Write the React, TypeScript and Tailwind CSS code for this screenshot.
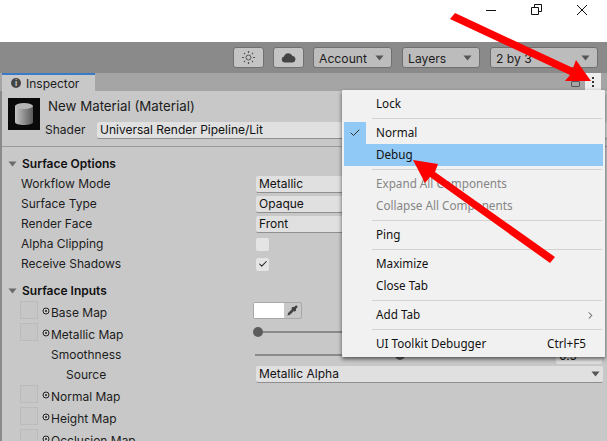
import { Check, ChevronRight, Pipette } from 'lucide-react'

const uiFont = 'font-["Inter","Liberation_Sans",sans-serif]'
const menuFont = 'font-["Noto_Sans","Liberation_Sans",sans-serif]'

function Caret({ color = '#555' }: { color?: string }) {
  return (
    <svg width="9" height="6" viewBox="0 0 9 6" className="shrink-0">
      <path d="M0.5 0.5H8.5L4.5 5.5Z" fill={color} />
    </svg>
  )
}

function ToolDropdown({ label, className }: { label: string; className: string }) {
  return (
    <div className={`flex h-[21px] items-center justify-between rounded-[3px] border border-[#707070] bg-[#bcbcbc] pl-[5px] pr-[7px] text-[12.2px] text-[#1c1c1c] ${className}`}>
      <span className="mt-[3px]">{label}</span>
      <Caret />
    </div>
  )
}

function FieldDropdown({ label }: { label: string }) {
  return (
    <div className="flex h-[17px] w-[347px] items-center justify-between rounded-[2px] border-b border-[#8f8f8f] bg-[#e0e0e0] pl-[3px] pr-[3px] text-[12px] text-[#111]">
      <span>{label}</span>
      <Caret />
    </div>
  )
}

function Row({ label, children }: { label: string; children?: React.ReactNode }) {
  return (
    <div className="flex h-5 items-center">
      <span className="w-[235px] text-[12px] text-[#1c1c1c]">{label}</span>
      {children}
    </div>
  )
}

function SectionHeader({ label }: { label: string }) {
  return (
    <div className="flex h-5 items-center gap-[5px] pl-[6px] text-[12px] font-semibold text-[#111]">
      <Caret color="#6a6a6a" />
      <span>{label}</span>
    </div>
  )
}

function MapRow({ label, children }: { label: string; children?: React.ReactNode }) {
  return (
    <div className="flex h-[22px] items-start">
      <div className="ml-[18px] h-[18px] w-[18px] border border-[#bbb] bg-[#c6c6c6]" />
      <svg width="8" height="8" viewBox="0 0 8 8" className="ml-[4px] mt-[6px] shrink-0">
        <circle cx="4" cy="4" r="3" fill="none" stroke="#222" strokeWidth="1" />
        <circle cx="4" cy="4" r="1" fill="#222" />
      </svg>
      <span className="ml-[1px] mt-[3px] w-[202px] text-[12px] text-[#1c1c1c]">{label}</span>
      {children}
    </div>
  )
}

function MenuItem({ label, shortcut, active, checked, disabled, submenu }: {
  label: string
  shortcut?: string
  active?: boolean
  checked?: boolean
  disabled?: boolean
  submenu?: boolean
}) {
  return (
    <div className={`flex h-[22px] items-center text-[11.7px] ${active ? 'bg-[#90c8f6]' : ''} ${disabled ? 'text-[#858585]' : 'text-[#111]'}`}>
      <div className={`flex h-[22px] w-[22px] items-center justify-center ${checked ? 'bg-[#90c8f6]' : ''}`}>
        {checked && <Check size={12} strokeWidth={2} className="text-[#333]" />}
      </div>
      <span className="ml-[10px] flex-1">{label}</span>
      {shortcut && <span className="mr-[17px]">{shortcut}</span>}
      {submenu && <ChevronRight size={11} className="mr-[7px] text-[#333]" />}
    </div>
  )
}

function MenuSep() {
  return <div className="my-[3px] ml-[28px] mr-[1px] h-px bg-[#d2d2d2]" />
}

export default function App() {
  return (
    <div className={`relative h-[441px] w-[607px] overflow-hidden bg-white ${uiFont}`}>
      {/* window title bar */}
      <div className="flex h-[42px] items-start justify-end">
        <svg width="101" height="20" viewBox="0 0 101 20" className="mr-[20px]" fill="none" stroke="#111" strokeWidth="1">
          <path d="M0 10.5H10" />
          <path d="M45.5 7.5H52.5V14.5H45.5ZM48.5 7.5V4.5H55.5V11.5H52.5" />
          <path d="M91 5L101 15M101 5L91 15" />
        </svg>
      </div>

      {/* toolbar */}
      <div className="flex h-[31px] items-start bg-[#8a8a8a] pl-[233px] pt-[5px]">
        <div className="flex h-[21px] w-[31px] items-center justify-center rounded-[3px] border border-[#707070] bg-[#c4c4c4]">
          <svg width="13" height="13" viewBox="0 0 13 13" fill="none" stroke="#555">
            <circle cx="6.5" cy="6.5" r="2.5" />
            <path d="M6.5 0V2M6.5 11V13M0 6.5H2M11 6.5H13M2 2L3 3M10 10L11 11M2 11L3 10M10 3L11 2" strokeWidth="1.2" />
          </svg>
        </div>
        <div className="ml-[9px] flex h-[21px] w-[31px] items-center justify-center rounded-[3px] border border-[#707070] bg-[#c4c4c4]">
          <svg width="15" height="11" viewBox="0 0 15 11" fill="#444">
            <path d="M3.5 10.5A3 3 0 0 1 3 4.6A4.5 4.5 0 0 1 11.5 4A3.3 3.3 0 0 1 11.8 10.5Z" />
          </svg>
        </div>
        <ToolDropdown label="Account" className="ml-[9px] w-[79px]" />
        <ToolDropdown label="Layers" className="ml-[10px] w-[78px]" />
        <ToolDropdown label="2 by 3" className="ml-[10px] w-[108px]" />
      </div>

      {/* tab strip */}
      <div className="flex h-[18px] items-stretch justify-between bg-[#a5a5a5] pl-[2px] pr-[6px]">
        <div className="flex w-[93px] items-center gap-[5px] border-t-2 border-[#3a7bc8] bg-[#c8c8c8] pl-[9px] text-[12px] text-[#1c1c1c]">
          <span className="flex h-[10px] w-[10px] items-center justify-center rounded-full bg-[#444] text-[8px] font-bold text-[#c8c8c8]">i</span>
          <span className="mt-[1px]">Inspector</span>
        </div>
        <div className="flex items-center gap-[5px]">
          <div className="mt-[4px] h-[6px] w-[9px] rounded-[1px] border border-[#555]" />
          <div className="flex h-[18px] w-[16px] flex-col items-center justify-center gap-[2px] bg-[#ededed]">
            <span className="h-[2px] w-[2px] bg-[#333]" />
            <span className="h-[2px] w-[2px] bg-[#333]" />
            <span className="h-[2px] w-[2px] bg-[#333]" />
          </div>
        </div>
      </div>

      {/* inspector body */}
      <div className="h-[350px] border-l-2 border-[#8a8a8a] bg-[#c8c8c8]">
        <div className="flex h-[56px] items-start border-b border-[#9a9a9a] pl-[6px] pt-[7px]">
          <div className="flex h-[32px] w-[32px] items-center justify-center bg-[#0a0a0a]">
            <svg width="20" height="24" viewBox="0 0 20 24">
              <defs>
                <linearGradient id="cyl" x1="0" x2="1" y1="0" y2="0">
                  <stop offset="0" stopColor="#c4c4c4" />
                  <stop offset="1" stopColor="#5a5a5a" />
                </linearGradient>
              </defs>
              <path d="M1 4V20C1 22 5 23 10 23S19 22 19 20V4Z" fill="url(#cyl)" />
              <ellipse cx="10" cy="4" rx="9" ry="3" fill="#b5b5b5" />
            </svg>
          </div>
          <div className="ml-[5px] flex-1">
            <div className="ml-[3px] -mt-[1px] text-[13.3px] leading-[18px] text-[#1c1c1c]">New Material (Material)</div>
            <div className="mt-[6px] flex items-center">
              <span className="w-[52px] text-[12px] text-[#1c1c1c]">Shader</span>
              <div className="flex h-[17px] flex-1 items-center rounded-[2px] border-b border-[#8f8f8f] bg-[#e0e0e0] pl-[3px] text-[12px] text-[#111]">
                Universal Render Pipeline/Lit
              </div>
            </div>
          </div>
        </div>

        <div className="mt-[7px]">
          <SectionHeader label="Surface Options" />
          <div className="pl-[19px]">
            <Row label="Workflow Mode"><FieldDropdown label="Metallic" /></Row>
            <Row label="Surface Type"><FieldDropdown label="Opaque" /></Row>
            <Row label="Render Face"><FieldDropdown label="Front" /></Row>
            <Row label="Alpha Clipping">
              <div className="h-[13px] w-[13px] rounded-[2px] bg-[#e4e4e4]" />
            </Row>
            <Row label="Receive Shadows">
              <div className="flex h-[13px] w-[13px] items-center justify-center rounded-[2px] bg-[#e4e4e4]">
                <Check size={10} strokeWidth={2.5} className="text-[#222]" />
              </div>
            </Row>
          </div>
          <div className="mt-[7px]">
            <SectionHeader label="Surface Inputs" />
          </div>
          <MapRow label="Base Map">
            <div className="mt-[1px] flex h-[17px] w-[49px] items-stretch rounded-[2px] border border-[#a8a8a8] bg-[#c8c8c8]">
              <div className="w-[30px] bg-white" />
              <Pipette size={11} fill="#444" className="ml-[3px] mt-[2px] text-[#333]" />
            </div>
          </MapRow>
          <MapRow label="Metallic Map">
            <div className="mt-[4px] flex w-[349px] items-center">
              <span className="h-[10px] w-[10px] rounded-full bg-[#5c5c5c]" />
              <span className="h-[2px] flex-1 bg-[#8a8a8a]" />
            </div>
          </MapRow>
          <div className="flex h-[20px] items-center">
            <span className="ml-[49px] w-[204px] text-[12px] text-[#1c1c1c]">Smoothness</span>
            <div className="flex w-[347px] items-center">
              <span className="h-[2px] w-[140px] bg-[#8a8a8a]" />
              <span className="h-[10px] w-[10px] rounded-full bg-[#5c5c5c]" />
              <span className="h-[2px] w-[150px] bg-[#8a8a8a]" />
              <span className="ml-[1px] h-[17px] flex-1 rounded-[2px] bg-[#e0e0e0] pl-[3px] text-[12px] leading-[17px] text-[#111]">0.5</span>
            </div>
          </div>
          <div className="flex h-[20px] items-center pb-[1px]">
            <span className="ml-[64px] w-[190px] text-[12px] text-[#1c1c1c]">Source</span>
            <FieldDropdown label="Metallic Alpha" />
          </div>
          <MapRow label="Normal Map" />
          <MapRow label="Height Map" />
          <MapRow label="Occlusion Map" />
        </div>
      </div>

      {/* context menu */}
      <div className={`absolute left-[342px] top-[90px] w-[263px] rounded-[1px] bg-[#f1f1f1] px-[2px] pb-[2px] pt-[3px] shadow-[0_2px_4px_rgba(0,0,0,0.6)] ${menuFont}`}>
        <MenuItem label="Lock" />
        <MenuSep />
        <MenuItem label="Normal" checked />
        <MenuItem label="Debug" active />
        <MenuSep />
        <MenuItem label="Expand All Components" disabled />
        <MenuItem label="Collapse All Components" disabled />
        <MenuSep />
        <MenuItem label="Ping" />
        <MenuSep />
        <MenuItem label="Maximize" />
        <MenuItem label="Close Tab" />
        <MenuSep />
        <MenuItem label="Add Tab" submenu />
        <MenuSep />
        <MenuItem label="UI Toolkit Debugger" shortcut="Ctrl+F5" />
      </div>

      {/* annotation arrows */}
      <svg width="607" height="441" viewBox="0 0 607 441" className="pointer-events-none absolute left-0 top-0" fill="#fe0000">
        <path d="M450 19L455 13L573 68L576 60L591 81L565 81L570 75Z" />
        <path d="M550 263L555 257L435 172L438 164L413 160L425 183L430 177Z" />
      </svg>
    </div>
  )
}
